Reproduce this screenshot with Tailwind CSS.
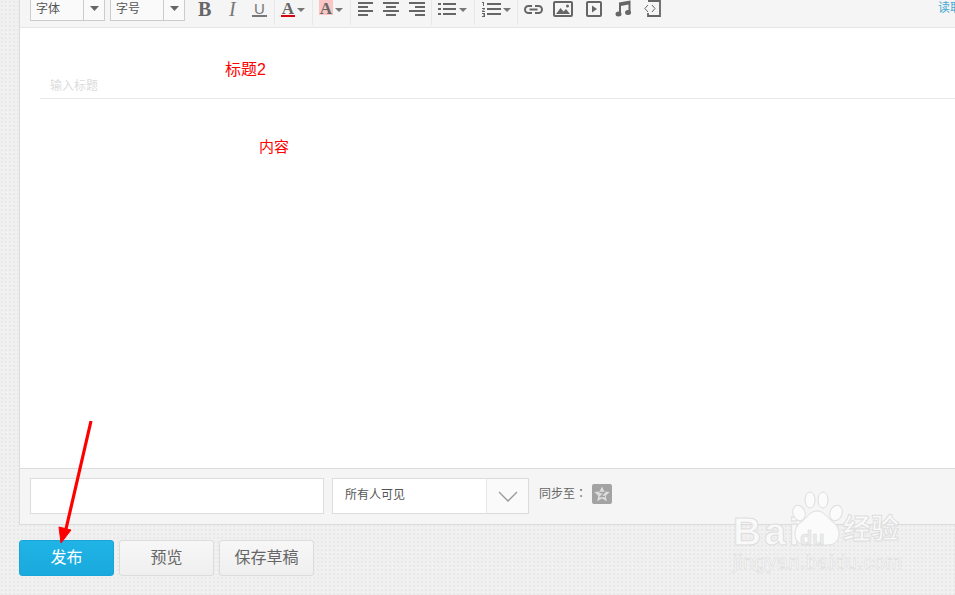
<!DOCTYPE html>
<html lang="zh">
<head>
<meta charset="utf-8">
<script src="https://cdn.jsdelivr.net/npm/@tailwindcss/browser@4"></script>
</head>
<body class="m-0 bg-[#f1f0f0] font-['Liberation_Sans','Noto_Sans_CJK_SC',sans-serif]">
<div class="relative h-[595px] w-[955px] overflow-hidden bg-[#f1f0f0] bg-[radial-gradient(#e9e8e8_0.7px,transparent_1px),radial-gradient(#f9f9f9_0.7px,transparent_1px)] bg-[length:4px_4px,5px_5px]">

  <main class="ml-[19px] flex h-[525px] flex-col border-b border-l border-[#dcdcdc] bg-white">
    <!-- toolbar -->
    <div class="flex h-[28px] shrink-0 items-start overflow-hidden border-b border-[#e6e6e6] bg-[#f5f5f5] pl-[10px] text-[#666] [&>*]:shrink-0">
      <div class="mt-[-4px] flex h-[25px] w-[75px] border border-[#ccc] bg-[#fafafa] text-[12px] leading-[24px] text-[#555]">
        <span class="w-[53px] border-r border-[#ccc] pl-[5px]">字体</span>
        <span class="flex flex-1 items-center justify-center"><svg width="9" height="5"><path d="M0 0h9L4.500 5z" fill="#666"/></svg></span>
      </div>
      <div class="ml-[5px] mt-[-4px] flex h-[25px] w-[75px] border border-[#ccc] bg-[#fafafa] text-[12px] leading-[24px] text-[#555]">
        <span class="w-[53px] border-r border-[#ccc] pl-[5px]">字号</span>
        <span class="flex flex-1 items-center justify-center"><svg width="9" height="5"><path d="M0 0h9L4.500 5z" fill="#666"/></svg></span>
      </div>
      <span class="ml-[13px] mt-[-2px] w-[16px] font-['Liberation_Serif'] text-[20px] font-bold leading-[23px]">B</span>
      <span class="ml-[13px] mt-[-2px] w-[12px] pl-[2px] font-['Liberation_Serif'] text-[20px] italic leading-[23px] text-[#777]">I</span>
      <span class="relative ml-[13px] mt-[-1px] w-[15px] text-center text-[15px] leading-[19px] text-[#777]">U<span class="absolute left-0 top-[16px] h-[2px] w-full bg-[#777]"></span></span>
      <span class="ml-[7px] mt-[-2px] h-[27px] w-px bg-[#e8e8e8]"></span>

      <span class="relative ml-[6px] mt-[-1px] w-[14px] text-center font-['Liberation_Serif'] text-[17px] font-bold leading-[19px]">A<span class="absolute left-0 top-[16px] h-[2px] w-full bg-[#d9000f]"></span></span>
      <svg class="ml-[2px] mt-[8px]" width="8" height="4"><path d="M0 0h8L4 4z" fill="#777"/></svg>
      <span class="ml-[7px] mt-[-2px] h-[27px] w-px bg-[#e8e8e8]"></span>

      <span class="ml-[6px] w-[14px] bg-[linear-gradient(#f9c5c5,#f9c5c5)] bg-[length:100%_15px] bg-no-repeat text-center font-['Liberation_Serif'] text-[17px] font-bold leading-[17px]">A</span>
      <svg class="ml-[2px] mt-[8px]" width="8" height="4"><path d="M0 0h8L4 4z" fill="#777"/></svg>
      <span class="ml-[7px] mt-[-2px] h-[27px] w-px bg-[#e8e8e8]"></span>

      <svg class="ml-[7px] mt-[1px]" width="15" height="15" fill="#666"><path d="M0 1h15v2H0zM0 5h10v2H0zM0 9h15v2H0zM0 13h10v2H0z"/></svg>
      <svg class="ml-[10px] mt-[1px]" width="16" height="15" fill="#666"><path d="M0 1h16v2H0zM3 5h10v2H3zM0 9h16v2H0zM3 13h10v2H3z"/></svg>
      <svg class="ml-[10px] mt-[1px]" width="16" height="15" fill="#666"><path d="M0 1h16v2H0zM6 5h10v2H6zM0 9h16v2H0zM6 13h10v2H6z"/></svg>
      <span class="ml-[6px] mt-[-2px] h-[27px] w-px bg-[#e8e8e8]"></span>

      <svg class="ml-[6px] mt-[2px]" width="18" height="14" fill="#666"><path d="M0 1h3v2H0zM5 1h13v2H5zM0 6h3v2H0zM5 6h13v2H5zM0 11h3v2H0zM5 11h13v2H5z"/></svg>
      <svg class="ml-[3px] mt-[8px]" width="8" height="4"><path d="M0 0h8L4 4z" fill="#777"/></svg>
      <span class="ml-[7px] mt-[-2px] h-[27px] w-px bg-[#e8e8e8]"></span>

      <svg class="ml-[6px] mt-[1px]" width="20" height="16" fill="#666"><path d="M1 1h2v4H2V2H1zM1 7h3v1L2 10h2v1H1v-1l2-2H1zM1 12h3v4H1v-1h2v-.5H2v-1h1V13H1zM6 2h14v2H6zM6 7h14v2H6zM6 12h14v2H6z"/></svg>
      <svg class="ml-[2px] mt-[8px]" width="8" height="4"><path d="M0 0h8L4 4z" fill="#777"/></svg>
      <span class="ml-[6px] mt-[-2px] h-[27px] w-px bg-[#e8e8e8]"></span>

      <svg class="ml-[6px] mt-[5px]" width="19" height="9" fill="none" stroke="#666" stroke-width="2"><path d="M8 1H4.500a3.500 3.500 0 0 0 0 7H8M11 1h3.500a3.500 3.500 0 0 1 0 7H11M5.500 4.500h8"/></svg>
      <svg class="ml-[10px] mt-[1px]" width="20" height="16"><rect x="1" y="1" width="18" height="14" rx="1" fill="none" stroke="#666" stroke-width="2"/><path d="M3 13l4.500-6 3 3.500 2.500-2.500 4 5z" fill="#666"/><circle cx="14.500" cy="5" r="1.500" fill="#666"/></svg>
      <svg class="ml-[13px] mt-[1px]" width="16" height="16"><rect x="1" y="1" width="14" height="14" rx="1" fill="none" stroke="#666" stroke-width="2"/><path d="M6 4.500l5 3.500-5 3.500z" fill="#666"/></svg>
      <svg class="ml-[13px]" width="16" height="17" fill="#666"><path d="M4 2.500L15.500 .5v12h-2V4.500L6 6v8.500H4z"/><ellipse cx="3.500" cy="14" rx="3" ry="2.500"/><ellipse cx="13" cy="12.500" rx="3" ry="2.500"/></svg>
      <svg class="ml-[13px]" width="17" height="17" fill="none" stroke="#666"><path d="M4 1h12v15H4v-3" stroke-width="1.800"/><path d="M4 5L.8 8.500 4 12M8 5l3 3.500L8 12" stroke-width="1"/></svg>
      <span class="ml-[277px] whitespace-nowrap text-[12px] leading-[16px] text-[#43a8d3]">读取</span>
    </div>

    <!-- title -->
    <div class="ml-[20px] h-[71px] shrink-0 border-b border-[#e8e8e8]">
      <div class="pl-[185px] pt-[31px] text-[16px] leading-[22px] text-[#f00]">标题2</div>
      <div class="mt-[-3px] pl-[10px] text-[12px] leading-[16px] text-[#dcdcdc]">输入标题</div>
    </div>

    <!-- content -->
    <div class="flex-1 pl-[239px] pt-[37px] text-[15px] leading-[22px] text-[#f00]">内容</div>

    <!-- footer -->
    <div class="flex h-[56px] shrink-0 items-start border-t border-[#dcdcdc] bg-[#f5f5f5] pl-[10px] pt-[9px]">
      <div class="h-[36px] w-[294px] border border-[#dcdcdc] bg-white"></div>
      <div class="ml-[8px] flex h-[36px] w-[197px] border border-[#dcdcdc] bg-white text-[12px] leading-[32px] text-[#555]">
        <span class="w-[154px] border-r border-[#e8e8e8] pl-[12px]">所有人可见</span>
        <span class="flex flex-1 items-center justify-center bg-[#fafafa]"><svg width="20" height="11" fill="none" stroke="#999" stroke-width="1.300"><path d="M1 1l9 9 9-9"/></svg></span>
      </div>
      <div class="flex h-[36px] items-center">
        <span class="mb-[6px] ml-[10px] text-[12px] leading-[16px] text-[#666]">同步至<span lang="zh-Hant" class="font-['Noto_Sans_CJK_TC']">：</span></span>
        <svg class="mb-[4px] ml-[5px]" width="20" height="20"><rect width="20" height="20" rx="2" fill="#a3a3a3"/><path d="M10 2.500l2.300 5 5.400.6-4 3.700 1.100 5.400L10 14.500l-4.800 2.700 1.100-5.400-4-3.700 5.400-.6z" fill="#dedede"/><path d="M7.500 8.500h5l-4 4h4.500" fill="none" stroke="#a3a3a3" stroke-width="1.300"/></svg>
      </div>
    </div>
  </main>

  <!-- buttons -->
  <div class="ml-[19px] mt-[15px] flex gap-[5px] text-[16px]">
    <button class="h-[36px] w-[95px] rounded-[3px] border border-[#1aa5d8] bg-gradient-to-b from-[#20b4e6] to-[#1aa9dc] leading-[34px] text-white">发布</button>
    <button class="h-[36px] w-[95px] rounded-[3px] border border-[#dcdcdc] bg-gradient-to-b from-[#f7f7f7] to-[#efefef] leading-[34px] text-[#666]">预览</button>
    <button class="h-[36px] w-[95px] rounded-[3px] border border-[#dcdcdc] bg-gradient-to-b from-[#f7f7f7] to-[#efefef] leading-[34px] text-[#666]">保存草稿</button>
  </div>

  <!-- annotation arrow -->
  <svg class="absolute left-[50px] top-[415px]" width="50" height="130"><path d="M41 6L16 114" stroke="#f00" stroke-width="3.200" fill="none"/><path d="M11 128L9 112 21 115z" fill="#f00" stroke="#f00" stroke-width="1"/></svg>

  <!-- watermark -->
  <div class="absolute left-[733px] top-[491px] h-[85px] w-[190px]">
    <span class="absolute left-0 top-[19px] text-[39px] font-bold leading-[44px] tracking-[3px] text-[#fbfbfb]/90 [-webkit-text-stroke:1px_#dedede]">Bai</span>
    <svg class="absolute left-[57px] top-0" width="56" height="56"><g fill="#fbfbfb" stroke="#dedede"><ellipse cx="9" cy="22" rx="6" ry="8" transform="rotate(-20 9 22)"/><ellipse cx="20" cy="9" rx="5" ry="8"/><ellipse cx="33" cy="9" rx="5" ry="8"/><ellipse cx="46" cy="22" rx="6" ry="8" transform="rotate(20 46 22)"/><path d="M27 20c7 0 9 6 17 12 8 6 7 22-6 22H16C3 54 2 38 10 32c8-6 10-12 17-12z"/></g></svg>
    <span class="absolute left-[67px] top-[36px] text-[20px] font-bold leading-[22px] text-[#ececec] [-webkit-text-stroke:0.500px_#d8d8d8]">du</span>
    <span class="absolute left-[110px] top-[21px] whitespace-nowrap text-[28px] font-bold leading-[36px] text-[#fbfbfb]/90 [-webkit-text-stroke:1px_#dedede]">经验</span>
    <span class="absolute left-0 top-[59px] whitespace-nowrap text-[20px] leading-[24px] tracking-[0.500px] text-[#fbfbfb]/90 [-webkit-text-stroke:0.500px_#d8d8d8]">jingyan.baidu.com</span>
  </div>
</div>
</body>
</html>
